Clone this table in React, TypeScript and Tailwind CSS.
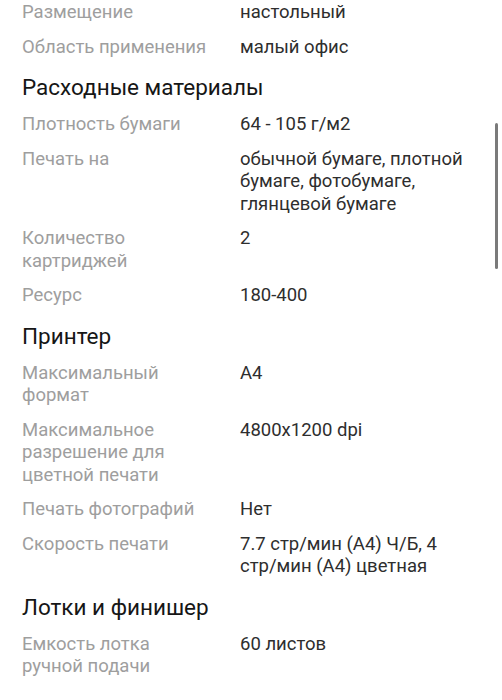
import React from 'react'

type Row = { label: string; value: string }
type Section = { title?: string; rows: Row[] }

const sections: Section[] = [
  {
    rows: [
      { label: 'Размещение', value: 'настольный' },
      { label: 'Область применения', value: 'малый офис' },
    ],
  },
  {
    title: 'Расходные материалы',
    rows: [
      { label: 'Плотность бумаги', value: '64 - 105 г/м2' },
      { label: 'Печать на', value: 'обычной бумаге, плотной бумаге, фотобумаге, глянцевой бумаге' },
      { label: 'Количество картриджей', value: '2' },
      { label: 'Ресурс', value: '180-400' },
    ],
  },
  {
    title: 'Принтер',
    rows: [
      { label: 'Максимальный формат', value: 'A4' },
      { label: 'Максимальное разрешение для цветной печати', value: '4800x1200 dpi' },
      { label: 'Печать фотографий', value: 'Нет' },
      { label: 'Скорость печати', value: '7.7 стр/мин (A4) Ч/Б, 4 стр/мин (A4) цветная' },
    ],
  },
  {
    title: 'Лотки и финишер',
    rows: [{ label: 'Емкость лотка ручной подачи', value: '60 листов' }],
  },
]

function SpecRow({ label, value }: Row) {
  return (
    <div className="flex text-[18.5px] leading-[22.5px]">
      <div className="w-[192px] mr-[26px] shrink-0 text-[#9e9e9e]">{label}</div>
      <div className="w-[232px] text-[#2e2e2e]">{value}</div>
    </div>
  )
}

export default function App() {
  return (
    <div
      className="relative w-[502px] h-[700px] overflow-hidden bg-white"
      style={{ fontFamily: 'Roboto, "Noto Sans", sans-serif' }}
    >
      <div className="flex flex-col gap-3 px-[22px] pt-[1px]">
        {sections.map((s, i) => (
          <React.Fragment key={i}>
            {s.title && (
              <h2 className="mt-[3px] text-[22.5px] leading-[28px] text-[#161616]">{s.title}</h2>
            )}
            {s.rows.map((r) => (
              <SpecRow key={r.label} {...r} />
            ))}
          </React.Fragment>
        ))}
      </div>
      {/* scroll indicator */}
      <div className="absolute left-[495px] top-[123px] w-[3px] h-[146px] rounded-full bg-[#7a7a7a]" />
    </div>
  )
}
